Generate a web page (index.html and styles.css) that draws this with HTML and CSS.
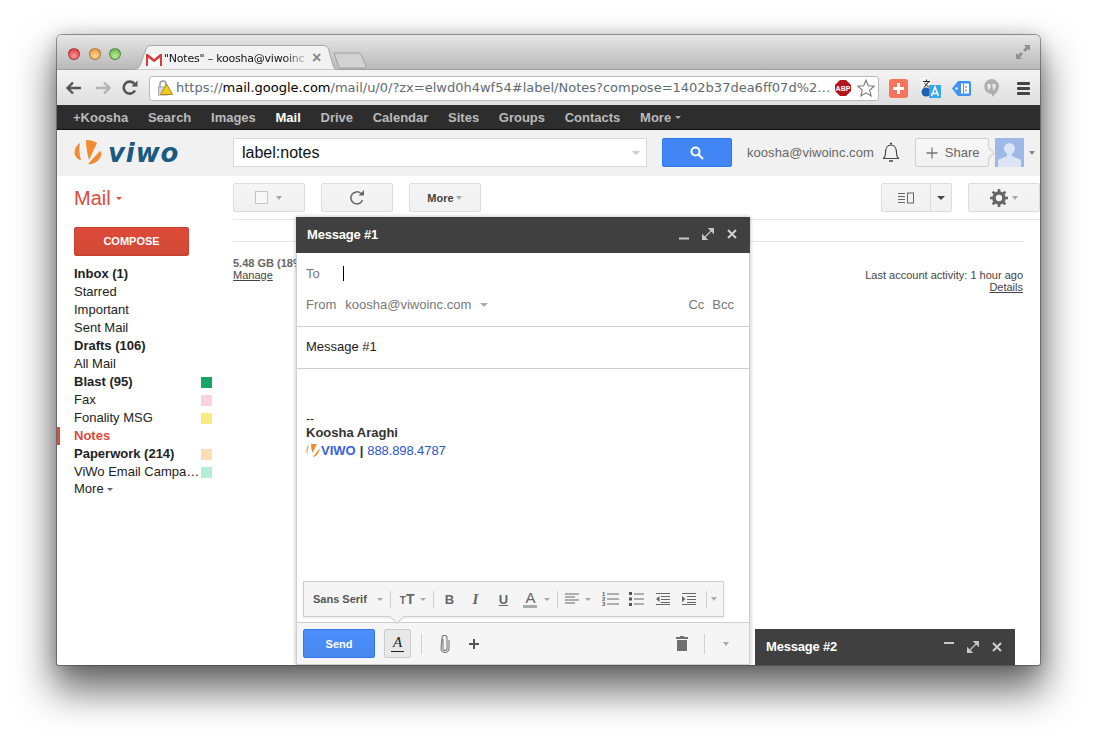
FILE: index.html
```html
<!DOCTYPE html>
<html lang="en">
<head>
<meta charset="utf-8">
<title>Notes</title>
<link rel="stylesheet" href="styles.css">
</head>
<body>
<div class="window">
  <div class="tabstrip">
    <div class="lights"><i class="light red"></i><i class="light amber"></i><i class="light green"></i></div>
    <div class="tab">
      <svg class="tabshape" width="205" height="25" viewBox="0 0 205 25"><path d="M0 24.500C6 24.500 7 21 9 15L13 4C14 1.500 15.500 .5 18 .5H190C193 .5 194.500 1.500 195.500 4L199 17C200 21 201 24.500 204 24.500" fill="#f2f2f2" stroke="#a8a8a8"/></svg>
      <svg class="gmail" width="16" height="12" viewBox="0 0 16 12"><rect width="16" height="12" fill="#fff"/><path d="M1 12V1.500L8 7l7-5.500V12" fill="none" stroke="#dc3b3b" stroke-width="2"/><path d="M0 0h2l6 5 6-5h2L8 7z" fill="#dc3b3b"/></svg>
      <span class="tabtitle">"Notes" – koosha@viwoinc</span>
      <span class="tabx">×</span>
    </div>
    <svg class="newtab" width="34" height="17" viewBox="0 0 34 17"><path d="M1 1H25C27 1 28 2 29 4L33 14C33.500 15 33 16 31 16H9C7 16 6 15 5.500 14L1 1Z" fill="#d2d2d2" stroke="#a0a0a0"/></svg>
    <svg class="fullscreen" width="16" height="16" viewBox="0 0 16 16"><path d="M9 1h6v6l-2-2-3 3-2-2 3-3zM1 9l2 2 3-3 2 2-3 3 2 2H1z" fill="#8f8f8f"/></svg>
  </div>
  <div class="toolbar">
    <svg class="navicon" width="16" height="14" viewBox="0 0 16 14"><path d="M1 7h14M7 1.500 1.500 7 7 12.500" fill="none" stroke="#555" stroke-width="2.400"/></svg>
    <svg class="navicon" width="16" height="14" viewBox="0 0 16 14"><path d="M15 7H1M9 1.500 14.500 7 9 12.500" fill="none" stroke="#b4b4b4" stroke-width="2.400"/></svg>
    <svg class="navicon reload" width="16" height="16" viewBox="0 0 16 16"><path d="M13 10.500A6 6 0 1 1 12.500 4" fill="none" stroke="#555" stroke-width="2.600"/><path d="M9.500 6.500H15.500V.5z" fill="#555"/></svg>
    <div class="omnibox">
      <svg class="lock" width="16" height="16" viewBox="0 0 16 16"><path d="M3 7V4a3 3 0 0 1 6 0v3" fill="none" stroke="#999" stroke-width="1.500"/><rect x="1.500" y="7" width="9" height="8" fill="#d8d8d8" stroke="#aaa"/><path d="M9.500 4 15.500 14.500H3.500z" fill="#f4c91f" stroke="#a98a10" stroke-linejoin="round"/></svg>
      <span class="url"><span class="dim">https://</span>mail.google.com<span class="dim">/mail/u/0/?zx=elwd0h4wf54#label/Notes?compose=1402b37dea6ff07d%2…</span></span>
      <svg class="abp" width="16" height="16" viewBox="0 0 16 16"><path d="M5 0h6l5 5v6l-5 5H5l-5-5V5z" fill="#b5141b"/></svg>
      <span class="abptext">ABP</span>
      <svg class="star" width="18" height="18" viewBox="0 0 18 18"><path d="M9 1.200 11.300 6.700 17.200 7.200 12.700 11.100 14.100 16.900 9 13.800 3.900 16.900 5.300 11.100.8 7.200 6.700 6.700z" fill="#fff" stroke="#777" stroke-width="1.100"/></svg>
    </div>
    <div class="extensions">
      <svg width="19" height="19" viewBox="0 0 19 19"><rect width="19" height="19" rx="3" fill="#f8735c"/><path d="M9.500 4v11M4 9.500h11" stroke="#fff" stroke-width="3"/></svg>
      <svg class="e2" width="20" height="20" viewBox="0 0 20 20"><path d="M0 0h10v12H0z" fill="#f4f4f4"/><path d="M2 3.500h7M5.500 1.500v2M3 9.500 7.500 4M3.500 5 8 9.500" stroke="#222" fill="none"/><circle cx="5" cy="14" r="4.500" fill="#1e5fae"/><path d="M8 7h12v13H8z" fill="#3aa6ea"/><path d="M10.500 18 14 9l3.500 9M11.500 15.500h5" stroke="#fff" stroke-width="1.500" fill="none"/></svg>
      <svg class="e3" width="19" height="15" viewBox="0 0 19 15"><path d="M6 0h11a2 2 0 0 1 2 2v11a2 2 0 0 1-2 2H6L0 7.500z" fill="#3f93ee"/><path d="M9 2.500h8v10H9z" fill="#fff"/><path d="M11.500 2.500v10" stroke="#3f93ee"/><path d="M14 5v2M14 8.500v2" stroke="#3f93ee" stroke-width="1.200"/><circle cx="4.500" cy="7.500" r="1.200" fill="#fff"/></svg>
      <svg class="e4" width="15" height="18" viewBox="0 0 15 18"><path d="M7.500 0a7.500 7.500 0 0 1 7.500 7.500C15 11.500 11.500 15 8 18V15A7.500 7.500 0 0 1 7.500 0z" fill="#b0b0b0"/><path d="M3.500 5h3v3.500L5 11H4l.5-2.500h-1zM8.500 5h3v3.500L10 11H9l.5-2.500h-1z" fill="#eee"/></svg>
      <span class="menu"><i></i><i></i><i></i></span>
    </div>
  </div>
  <nav class="gbar">
    <a>+Koosha</a><a>Search</a><a>Images</a><a class="on">Mail</a><a>Drive</a><a>Calendar</a><a>Sites</a><a>Groups</a><a>Contacts</a><a>More <i class="caret gb"></i></a>
  </nav>
  <header class="searchbar">
    <div class="logo">
      <svg width="30" height="30" viewBox="0 0 30 30"><path d="M6 5C1 8 0 14 1 17C2 20 5 22 7 22C5 16 5 10 6 5Z" fill="#f28a30"/><path d="M12 2C16 2 20 3 23 5L15 22C13 15 12 8 12 2Z" fill="#f28a30"/><path d="M26 13 14 26C20 27 27 22 27.500 15Z" fill="#f28a30"/></svg>
      <span class="logotext">viwo</span>
    </div>
    <div class="search"><span>label:notes</span><i class="caret s"></i></div>
    <button class="searchbtn" aria-label="Search"><svg width="14" height="14" viewBox="0 0 14 14"><circle cx="5.500" cy="5.500" r="4" fill="none" stroke="#fff" stroke-width="2"/><path d="M8.500 8.500 13 13" stroke="#fff" stroke-width="2"/></svg></button>
    <span class="account">koosha@viwoinc.com</span>
    <svg class="bell" width="18" height="21" viewBox="0 0 18 21"><path d="M1 16.500c2-1 2.500-3 2.500-6 0-4 2-7.500 5.500-7.500s5.500 3.500 5.500 7.500c0 3 .5 5 2.500 6z" fill="none" stroke="#444" stroke-width="1.100"/><path d="M8 1.500h2M7 19h4" stroke="#444" stroke-width="1.500"/></svg>
    <div class="share"><svg width="12" height="12" viewBox="0 0 12 12"><path d="M6 .5v11M.5 6h11" stroke="#777" stroke-width="1.300"/></svg>Share<i class="sharetip"></i></div>
    <svg class="avatar" width="29" height="29" viewBox="0 0 29 29"><rect width="29" height="29" fill="#9fb9e6"/><circle cx="14.500" cy="10.500" r="5.500" fill="#dbe5f6"/><path d="M12 14h5v4l9 4v7H3v-7l9-4z" fill="#dbe5f6"/></svg>
    <i class="caret av"></i>
  </header>
  <div class="main">
    <aside class="sidebar">
      <div class="mail">Mail <i class="caret red"></i></div>
      <button class="compose">COMPOSE</button>
      <ul class="labels">
        <li class="bold"><span>Inbox (1)</span></li>
        <li><span>Starred</span></li>
        <li><span>Important</span></li>
        <li><span>Sent Mail</span></li>
        <li class="bold"><span>Drafts (106)</span></li>
        <li><span>All Mail</span></li>
        <li class="bold"><span>Blast (95)</span><i class="chip c1"></i></li>
        <li><span>Fax</span><i class="chip c2"></i></li>
        <li><span>Fonality MSG</span><i class="chip c3"></i></li>
        <li class="active"><span>Notes</span></li>
        <li class="bold"><span>Paperwork (214)</span><i class="chip c4"></i></li>
        <li><span>ViWo Email Campa…</span><i class="chip c5"></i></li>
        <li class="more"><span>More <i class="caret m"></i></span></li>
      </ul>
    </aside>
    <section class="content">
      <div class="actions">
        <div class="btn w72"><i class="checkbox"></i><i class="caret g"></i></div>
        <div class="btn w72"><svg width="16" height="16" viewBox="0 0 16 16"><path d="M13.500 10A6 6 0 1 1 12 3.500" fill="none" stroke="#666" stroke-width="1.500"/><path d="M9.500 5.500H15V0z" fill="#666"/></svg></div>
        <div class="btn w72 moreb">More<i class="caret g tight"></i></div>
        <div class="spacer"></div>
        <div class="split"><div class="btn pane"><svg width="16" height="12" viewBox="0 0 16 12"><path d="M0 1.500h7M0 4.500h7M0 7.500h7M0 10.500h7" stroke="#666"/><rect x="9.500" y="1" width="6" height="10" fill="none" stroke="#666"/></svg></div><div class="btn panecaret"><i class="caret d"></i></div></div>
        <div class="btn gear"><svg width="18" height="18" viewBox="0 0 18 18"><circle cx="9" cy="9" r="5" fill="none" stroke="#666" stroke-width="3.600"/><path d="M9 0v4M9 14v4M0 9h4M14 9h4M2.600 2.600l2.800 2.800M12.600 12.600l2.800 2.800M2.600 15.400l2.800-2.800M12.600 5.400l2.800-2.800" stroke="#666" stroke-width="2.600"/></svg><i class="caret g"></i></div>
      </div>
      <div class="rule2"></div>
      <div class="footerinfo">
        <div class="quota"><strong>5.48 GB (18%)</strong><br><u>Manage</u></div>
        <div class="activity">Last account activity: 1 hour ago<br><u>Details</u></div>
      </div>
    </section>
  </div>

  <div class="composer">
    <div class="cbar"><strong>Message #1</strong>
      <span class="cicons">
        <svg width="12" height="12" viewBox="0 0 12 12"><path d="M1 10.500h10" stroke="#c8c8c8" stroke-width="2"/></svg>
        <svg width="12" height="12" viewBox="0 0 12 12"><path d="M7 .5h4.500V5zM.5 7V11.500H5zM9 3 3 9" fill="#c8c8c8" stroke="#c8c8c8" stroke-width="1.100"/></svg>
        <svg width="12" height="12" viewBox="0 0 12 12"><path d="M2 2l8 8M10 2l-8 8" stroke="#d0d0d0" stroke-width="2"/></svg>
      </span>
    </div>
    <div class="field to"><span>To</span><i class="cursor"></i></div>
    <div class="field from"><span class="lbl">From</span><span class="addr">koosha@viwoinc.com</span><i class="caret g"></i><span class="cc">Cc</span><span class="bcc">Bcc</span></div>
    <div class="subject">Message #1</div>
    <div class="body">
      <div class="sig">--</div>
      <div class="signame">Koosha Araghi</div>
      <div class="sigline"><svg width="15" height="14" viewBox="0 0 15 14"><path d="M3 1C0 3 0 8 1.500 11C1 7 2 4 3 1Z" fill="#f28a30"/><path d="M5 0H11L6.500 9C5.500 6 5 3 5 0Z" fill="#f28a30"/><path d="M14 4 7 13C10 13 13 9 14 4Z" fill="#f28a30"/></svg><span class="viwo">VIWO</span><span class="bar">|</span><span class="phone">888.898.4787</span></div>
    </div>
    <div class="format">
      <span class="ff">Sans Serif</span><i class="caret g fa"></i><i class="sep"></i>
      <span class="ic tt"><small>T</small>T</span><i class="caret g fb"></i><i class="sep"></i>
      <span class="ic bo">B</span><span class="ic it">I</span><span class="ic un">U</span><span class="ic colr">A</span><i class="caret g fb"></i><i class="sep"></i>
      <svg class="alig" width="14" height="12" viewBox="0 0 14 12"><path d="M0 1h14M0 4h10M0 7h14M0 10h10" stroke="#666"/></svg><i class="caret g fb"></i>
      <svg class="ol" width="17" height="14" viewBox="0 0 17 14"><path d="M5 2h12M5 7h12M5 12h12" stroke="#666"/><text x="0" y="4" class="mini">1</text><text x="0" y="9" class="mini">2</text><text x="0" y="14" class="mini">3</text></svg>
      <svg class="ul" width="15" height="14" viewBox="0 0 15 14"><path d="M5 2h10M5 7h10M5 12h10" stroke="#666"/><path d="M0 0h3v3H0zM0 5.500h3v3H0zM0 11h3v3H0z" fill="#555"/></svg>
      <svg class="ind" width="14" height="12" viewBox="0 0 14 12"><path d="M0 .5h14M5 3.500h9M5 6.500h9M5 9.500h9M0 11.500h14" stroke="#666"/><path d="M3.500 3v6L0 6z" fill="#666"/></svg>
      <svg class="ind" width="14" height="12" viewBox="0 0 14 12"><path d="M0 .5h14M5 3.500h9M5 6.500h9M5 9.500h9M0 11.500h14" stroke="#666"/><path d="M0 3v6l3.500-3z" fill="#666"/></svg>
      <i class="sep"></i><i class="caret g fc"></i>
      <i class="tip"></i>
    </div>
    <div class="actionsbar">
      <button class="send">Send</button>
      <div class="fmtbtn"><span>A</span></div>
      <i class="vsep"></i>
      <svg class="clipicon" width="10" height="18" viewBox="0 0 10 18"><path d="M3 4v9.500a2 2 0 0 0 4 0V3a2.500 2.500 0 0 0-5-.2L1 13.500a4 4 0 0 0 8 0V5" fill="none" stroke="#777" stroke-width="1.100"/></svg>
      <svg class="plus" width="12" height="12" viewBox="0 0 12 12"><path d="M6 1v10M1 6h10" stroke="#555" stroke-width="2"/></svg>
      <span class="grow"></span>
      <svg class="trash" width="12" height="15" viewBox="0 0 12 15"><path d="M4 0h4v1h4v2H0V1h4zM1 4h10v11H1z" fill="#6f6f6f"/></svg>
      <i class="vsep v2"></i>
      <i class="caret g"></i>
    </div>
  </div>

  <div class="minimized"><strong>Message #2</strong>
    <span class="cicons">
      <svg width="12" height="12" viewBox="0 0 12 12"><path d="M1 2h10" stroke="#c8c8c8" stroke-width="2"/></svg>
      <svg width="12" height="12" viewBox="0 0 12 12"><path d="M7 .5h4.500V5zM.5 7V11.500H5zM9 3 3 9" fill="#c8c8c8" stroke="#c8c8c8" stroke-width="1.100"/></svg>
      <svg width="12" height="12" viewBox="0 0 12 12"><path d="M2 2l8 8M10 2l-8 8" stroke="#d0d0d0" stroke-width="2"/></svg>
    </span>
  </div>
</div>
</body>
</html>
```

FILE: styles.css
```css
* { box-sizing: border-box; }
html, body { margin: 0; height: 100%; }
body { width: 1097px; height: 744px; background: #fff; overflow: hidden; position: relative; font-family: "Liberation Sans", Arial, sans-serif; font-size: 13px; color: #222; }
i { display: block; font-style: normal; }
button { font-family: inherit; border: 0; padding: 0; }

.window { position: absolute; left: 57px; top: 35px; width: 983px; height: 630px; border-radius: 5px 5px 2px 2px; overflow: hidden; background: #fff; box-shadow: 0 0 0 1px rgba(60,60,60,.5), 0 22px 38px 4px rgba(0,0,0,.58), 0 2px 16px rgba(0,0,0,.2); }

.tabstrip { height: 35px; background: linear-gradient(#e6e6e6, #b9b9b9); border-bottom: 1px solid #9e9e9e; position: relative; display: flex; align-items: flex-start; }
.lights { display: flex; gap: 8.500px; padding: 13px 0 0 11px; }
.light { width: 12px; height: 12px; border-radius: 50%; border: 1px solid rgba(0,0,0,.3); }
.red { background: radial-gradient(circle at 50% 70%, #f99, #d9262e); }
.amber { background: radial-gradient(circle at 50% 70%, #fd9, #de8a22); }
.green { background: radial-gradient(circle at 50% 70%, #be9, #5aa83f); }
.tab { position: absolute; left: 76px; top: 10px; width: 205px; height: 25px; }
.tabshape { position: absolute; left: 0; top: 0; }
.gmail { position: absolute; left: 13px; top: 9px; }
.tabtitle { position: absolute; left: 31px; top: 6px; white-space: nowrap; font: 11px/16px "DejaVu Sans", sans-serif; letter-spacing: -.22px; color: #111; -webkit-mask-image: linear-gradient(to right, #000 85%, rgba(0,0,0,.25)); mask-image: linear-gradient(to right, #000 85%, rgba(0,0,0,.25)); }
.tabx { position: absolute; left: 179px; top: 5px; font: bold 16px/16px "Liberation Sans", sans-serif; color: #888; }
.newtab { position: absolute; left: 276px; top: 17px; }
.fullscreen { position: absolute; right: 9px; top: 9px; }

.toolbar { height: 35px; background: linear-gradient(#f4f4f4, #dedede); display: flex; align-items: center; padding: 1px 0 0 9px; }
.navicon { margin-right: 13px; flex: none; }
.reload { margin-right: 11px; margin-left: -2px; }
.omnibox { width: 730px; height: 25px; background: #fff; border: 1px solid #bbb; border-radius: 3px; display: flex; align-items: center; padding-left: 7px; position: relative; flex: none; }
.lock { flex: none; }
.url { margin-left: 3px; font: 13px/16px "DejaVu Sans", sans-serif; color: #000; white-space: nowrap; }
.dim { color: #5f6b72; }
.abp { position: absolute; left: 685px; top: 3px; }
.abptext { position: absolute; left: 685px; top: 7px; width: 16px; text-align: center; color: #fff; font: bold 7px/9px "Liberation Sans", sans-serif; }
.star { position: absolute; left: 707px; top: 2px; }
.extensions { display: flex; align-items: center; margin-left: 10px; }
.e2 { margin-left: 13px; }
.e3 { margin-left: 11px; }
.e4 { margin-left: 13px; }
.menu { display: flex; flex-direction: column; gap: 2px; margin-left: 18px; }
.menu i { width: 13px; height: 3px; background: #444; border-radius: 1px; }

.gbar { height: 25px; background: #2d2d2d; border-bottom: 1px solid #111; display: flex; gap: 19.700px; padding: 0 0 0 16px; align-items: center; }
.gbar a { font-weight: bold; font-size: 13px; color: #bbb; white-space: nowrap; display: flex; align-items: center; gap: 4px; }
.gbar a.on { color: #fff; }

.caret { width: 0; height: 0; border-style: solid; border-width: 4px 4px 0; border-color: #999 transparent transparent; }
.caret.gb { border-width: 3px 3px 0; border-top-color: #aaa; }
.caret.red { border-width: 3px 3.500px 0; border-top-color: #dd4b39; }
.caret.g { border-width: 4px 3.500px 0; border-top-color: #aaa; }
.caret.d { border-top-color: #444; }

.searchbar { height: 46px; background: #f1f1f1; display: flex; align-items: center; padding-bottom: 1px; position: relative; }
.logo { width: 176px; flex: none; display: flex; align-items: center; padding-left: 17px; gap: 4px; }
.logotext { font: italic bold 26px/30px "DejaVu Sans", sans-serif; color: #1a5a80; letter-spacing: .9px; }
.search { width: 414px; height: 29px; background: #fff; border: 1px solid #d9d9d9; display: flex; align-items: center; justify-content: space-between; padding: 1px 6px 0 8px; font-size: 16px; color: #111; flex: none; }
.caret.s { border-top-color: #ccc; }
.searchbtn { width: 70px; height: 29px; margin-left: 15px; background: #4285f4; border: 1px solid #3079ed; border-radius: 2px; display: flex; align-items: center; justify-content: center; flex: none; }
.account { margin-left: 15px; color: #666; font-size: 13px; letter-spacing: .05px; white-space: nowrap; }
.bell { margin-left: 8px; flex: none; }
.share { margin-left: 15px; width: 74px; height: 29px; border: 1px solid #d0d0d0; border-radius: 2px; background: linear-gradient(#f8f8f8, #f1f1f1); display: flex; align-items: center; padding-left: 10px; color: #666; position: relative; flex: none; gap: 7px; }
.sharetip { position: absolute; right: -5px; top: 10px; width: 8px; height: 8px; background: #f3f3f3; border: solid #d0d0d0; border-width: 1px 1px 0 0; transform: rotate(45deg); }
.avatar { margin-left: 6px; flex: none; }
.caret.av { margin-left: 5px; border-width: 4px 3.500px 0; border-top-color: #888; }

.main { display: flex; height: 489px; }
.sidebar { width: 176px; flex: none; }
.mail { padding: 9px 0 0 17px; height: 51px; color: #dd4b39; font-size: 20px; line-height: 26px; display: flex; align-items: flex-start; gap: 5px; }
.caret.red { margin-top: 12px; }
.compose { display: block; margin-left: 17px; width: 115px; height: 29px; background: linear-gradient(#dd4b39, #d14836); border: 1px solid #c6412f; border-radius: 2px; color: #fff; font-weight: bold; font-size: 11px; text-align: center; padding-bottom: 2px; }
.labels { list-style: none; margin: 9px 0 0; padding: 0; }
.labels li { height: 18px; line-height: 18px; padding: 0 21px 0 17px; display: flex; align-items: center; justify-content: space-between; color: #222; white-space: nowrap; }
.labels li.bold { font-weight: bold; }
.labels li.active { color: #dd4b39; font-weight: bold; border-left: 3px solid #dd4b39; padding-left: 14px; }
.labels li.more { height: 16px; line-height: 16px; }
.labels li.more span { display: flex; align-items: center; gap: 3px; }
.caret.m { border-width: 3.500px 3.500px 0; border-top-color: #666; }
.chip { width: 11px; height: 11px; flex: none; }
.c1 { background: #16a765; }
.c2 { background: #fbd3e0; }
.c3 { background: #fbe983; }
.c4 { background: #ffdeb5; }
.c5 { background: #b3efd3; }

.content { flex: 1; position: relative; min-width: 0; }
.actions { display: flex; height: 44px; padding-top: 7px; gap: 16px; border-bottom: 1px solid #e5e5e5; align-items: flex-start; }
.btn { height: 29px; border: 1px solid #dcdcdc; border-radius: 2px; background: linear-gradient(#f5f5f5, #f1f1f1); display: flex; align-items: center; justify-content: center; color: #444; flex: none; }
.w72 { width: 72px; }
.checkbox { width: 13px; height: 13px; border: 1px solid #c6c6c6; background: #f8f8f8; margin: 0 8px 0 -1px; }
.moreb { font-size: 11px; font-weight: bold; gap: 2px; padding-right: 1px; }
.spacer { flex: 1; }
.split { display: flex; }
.btn.pane { width: 50px; border-radius: 2px 0 0 2px; }
.btn.panecaret { width: 21px; border-left: 0; border-radius: 0 2px 2px 0; }
.gear { width: 72px; gap: 4px; }
.rule2 { height: 1px; background: #e5e5e5; margin: 21px 16px 0 0; }
.footerinfo { display: flex; justify-content: space-between; margin-right: 17px; font-size: 11px; line-height: 12px; color: #444; padding-top: 15px; }
.quota strong { color: #666; }
.activity { text-align: right; padding-top: 12px; }
.activity u, .quota u { color: #444; }

.composer { position: absolute; left: 239px; top: 182px; width: 454px; height: 448px; background: #fff; box-shadow: 0 0 4px rgba(0,0,0,.3); border: solid #cfcfcf; border-width: 0 1px; display: flex; flex-direction: column; }
.cbar { height: 36px; margin: 0 -1px; flex: none; background: #404040; color: #fff; display: flex; align-items: center; justify-content: space-between; padding: 0 12px 2px 11px; font-size: 13px; letter-spacing: -.2px; }
.cicons { display: flex; gap: 12px; align-items: center; }
.field { display: flex; align-items: center; padding-left: 9px; color: #777; flex: none; }
.field.to { height: 38px; gap: 23px; padding-top: 3px; font-size: 13px; }
.cursor { width: 1px; height: 15px; background: #000; }
.field.from { height: 36px; padding-bottom: 8px; border-bottom: 1px solid #cfcfcf; padding-right: 15px; }
.lbl { margin-right: 9px; }
.addr { margin-right: 9px; }
.field.from .caret { margin-right: auto; border-width: 4px 4px 0; }
.cc { margin-right: 8px; }
.subject { height: 42px; line-height: 40px; padding-left: 9px; border-bottom: 1px solid #cfcfcf; color: #222; flex: none; }
.body { flex: 1; padding: 41px 0 0 9px; font-size: 13px; line-height: 18px; }
.sig { line-height: 14px; height: 14px; font-size: 12px; padding-top: 2px; }
.signame { font-weight: bold; color: #333; }
.sigline { display: flex; align-items: center; }
.viwo { color: #3b5fe0; font-weight: bold; }
.bar { font-weight: bold; margin: 0 4px; color: #333; }
.phone { color: #2b55cc; letter-spacing: -.1px; }
.format { position: absolute; left: 6px; top: 364px; width: 421px; height: 36px; background: #f5f5f5; border: 1px solid #cfcfcf; box-shadow: 0 1px 2px rgba(0,0,0,.1); display: flex; align-items: center; padding-left: 9px; color: #666; }
.ff { font-weight: bold; font-size: 11px; margin-right: 10px; color: #555; }
.sep { width: 1px; height: 17px; background: #cfcfcf; margin: 0 7px; flex: none; }
.ic { font-weight: bold; }
.tt { font-size: 14px; display: flex; align-items: baseline; margin: 0 6px 0 2px; }
.tt small { font-size: 10px; }
.bo { width: 14px; margin: 0 12px 0 1px; text-align: center; font-size: 13px; }
.it { width: 14px; margin-right: 14px; text-align: center; font-style: italic; font-family: "Liberation Serif", serif; font-size: 15px; }
.un { width: 14px; margin-right: 13px; text-align: center; text-decoration: underline; }
.colr { width: 14px; margin-right: 7px; text-align: center; border-bottom: 3px solid #aaa; line-height: 14px; font-size: 15px; font-weight: normal; }
.caret.fa, .caret.fb { border-width: 3px 3px 0; }
.caret.fc { border-width: 4px 3.500px 0; margin-left: -3px; }
.alig { margin: 0 6px 0 0; }
.ol { margin: 0 10px 0 11px; }
.mini { font-size: 6px; fill: #555; font-weight: bold; }
.ul { margin-right: 12px; }
.ind { margin-right: 12px; }
.ind + i.sep { margin-left: -2px; }
.tip { position: absolute; left: 88px; bottom: -6px; width: 10px; height: 10px; background: #f5f5f5; border: solid #cfcfcf; border-width: 0 1px 1px 0; transform: rotate(45deg); }
.actionsbar { height: 43px; flex: none; background: #f5f5f5; border-top: 1px solid #cfcfcf; border-bottom: 1px solid #cfcfcf; display: flex; align-items: center; padding: 0 20px 0 6px; }
.send { width: 72px; height: 29px; background: linear-gradient(#4d90fe, #4787ed); border: 1px solid #3079ed; border-radius: 2px; color: #fff; font-weight: bold; font-size: 11px; }
.fmtbtn { width: 27px; height: 29px; margin-left: 9px; background: #e8e8e8; border: 1px solid #ccc; border-radius: 2px; display: flex; justify-content: center; align-items: center; }
.fmtbtn span { font: italic 15px/15px "Liberation Serif", serif; border-bottom: 1px solid #222; padding: 0 2px 1px; color: #222; }
.vsep { width: 1px; height: 20px; background: #d0d0d0; margin-left: 10px; }
.clipicon { margin-left: 18px; }
.plus { margin-left: 18px; }
.grow { flex: 1; }
.v2 { margin: 0 18px 0 16px; }
.minimized { position: absolute; left: 698px; top: 594px; width: 260px; height: 36px; background: #404040; color: #fff; display: flex; align-items: center; justify-content: space-between; padding: 0 12px 1px 11px; font-size: 13px; letter-spacing: -.2px; }
```
